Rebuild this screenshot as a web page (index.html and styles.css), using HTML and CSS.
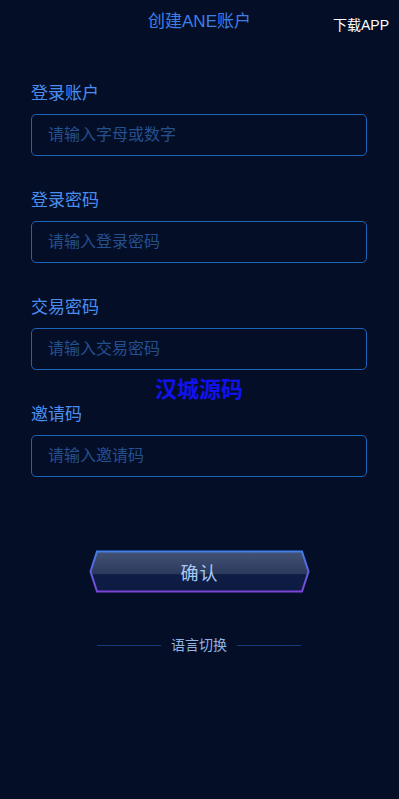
FILE: index.html
```html
<!DOCTYPE html>
<html lang="zh">
<head>
<meta charset="utf-8">
<title>创建ANE账户</title>
<link rel="stylesheet" href="styles.css">
</head>
<body>
<div class="page">
  <header class="header">
    <div class="title">创建ANE账户</div>
    <div class="download">下载APP</div>
  </header>
  <form class="form">
    <div class="field">
      <label class="label">登录账户</label>
      <div class="input"><span class="ph">请输入字母或数字</span></div>
    </div>
    <div class="field">
      <label class="label">登录密码</label>
      <div class="input"><span class="ph">请输入登录密码</span></div>
    </div>
    <div class="field">
      <label class="label">交易密码</label>
      <div class="input"><span class="ph">请输入交易密码</span></div>
    </div>
    <div class="field">
      <label class="label">邀请码</label>
      <div class="input"><span class="ph">请输入邀请码</span></div>
    </div>
    <div class="btn-wrap">
      <div class="btn">
        <svg class="btn-bg" width="221" height="43" viewBox="0 0 221 43">
          <defs>
            <linearGradient id="fill" x1="0" y1="0" x2="0" y2="1">
              <stop offset="0" stop-color="#445274"/>
              <stop offset="0.55" stop-color="#2c3a5e"/>
              <stop offset="0.58" stop-color="#0f1d45"/>
              <stop offset="1" stop-color="#0d1a42"/>
            </linearGradient>
            <linearGradient id="stroke" x1="0" y1="0" x2="0" y2="1">
              <stop offset="0" stop-color="#3f7fe8"/>
              <stop offset="1" stop-color="#7b45d6"/>
            </linearGradient>
          </defs>
          <polygon points="8,1.5 213,1.5 219.5,21.5 213,41.5 8,41.5 1.5,21.5" fill="url(#fill)" stroke="url(#stroke)" stroke-width="2"/>
        </svg>
        <span class="btn-text">确认</span>
      </div>
    </div>
    <div class="lang">
      <span class="line"></span>
      <span class="lang-text">语言切换</span>
      <span class="line"></span>
    </div>
  </form>
  <div class="watermark">汉城源码</div>
</div>
</body>
</html>
```
FILE: styles.css
```css
html, body {
  margin: 0;
  padding: 0;
  background: #050e27;
}
body {
  font-family: "Liberation Sans", "Noto Sans CJK SC", sans-serif;
}
.page {
  position: relative;
  width: 399px;
  min-height: 799px;
  background: #050e27;
}
.header {
  position: relative;
  height: 44px;
  display: flex;
  align-items: center;
  justify-content: center;
}
.title {
  font-size: 17px;
  color: #3c7fe6;
  line-height: 22px;
}
.download {
  position: absolute;
  right: 10px;
  top: 15px;
  font-size: 14px;
  line-height: 20px;
  color: #ffffff;
}
.form {
  padding: 39px 32px 0 31px;
  display: flex;
  flex-direction: column;
}
.field {
  display: flex;
  flex-direction: column;
  gap: 9px;
  margin-bottom: 34px;
}
.label {
  font-size: 17px;
  line-height: 22px;
  color: #4a8ef0;
}
.input {
  height: 40px;
  border: 1px solid #1c64b8;
  border-radius: 5px;
  display: flex;
  align-items: center;
  padding-left: 16px;
}
.ph {
  font-size: 16px;
  line-height: 20px;
  color: #24508f;
  margin-top: -1px;
}
.btn-wrap {
  display: flex;
  justify-content: center;
  margin-top: 39px;
  padding-left: 1px;
}
.btn {
  position: relative;
  width: 221px;
  height: 43px;
  display: flex;
  align-items: center;
  justify-content: center;
}
.btn-bg {
  position: absolute;
  left: 0;
  top: 0;
}
.btn-text {
  position: relative;
  font-size: 18px;
  color: #a9c9f2;
  letter-spacing: 1px;
}
.lang {
  margin-top: 42px;
  display: flex;
  align-items: center;
  justify-content: center;
  gap: 10px;
}
.line {
  width: 64px;
  height: 1px;
  background: #163a7c;
}
.lang-text {
  font-size: 14px;
  line-height: 20px;
  color: #8fb3e2;
}
.watermark {
  position: absolute;
  left: 155px;
  top: 377px;
  font-size: 22px;
  font-weight: bold;
  line-height: 26px;
  color: #1212ee;
}
```
